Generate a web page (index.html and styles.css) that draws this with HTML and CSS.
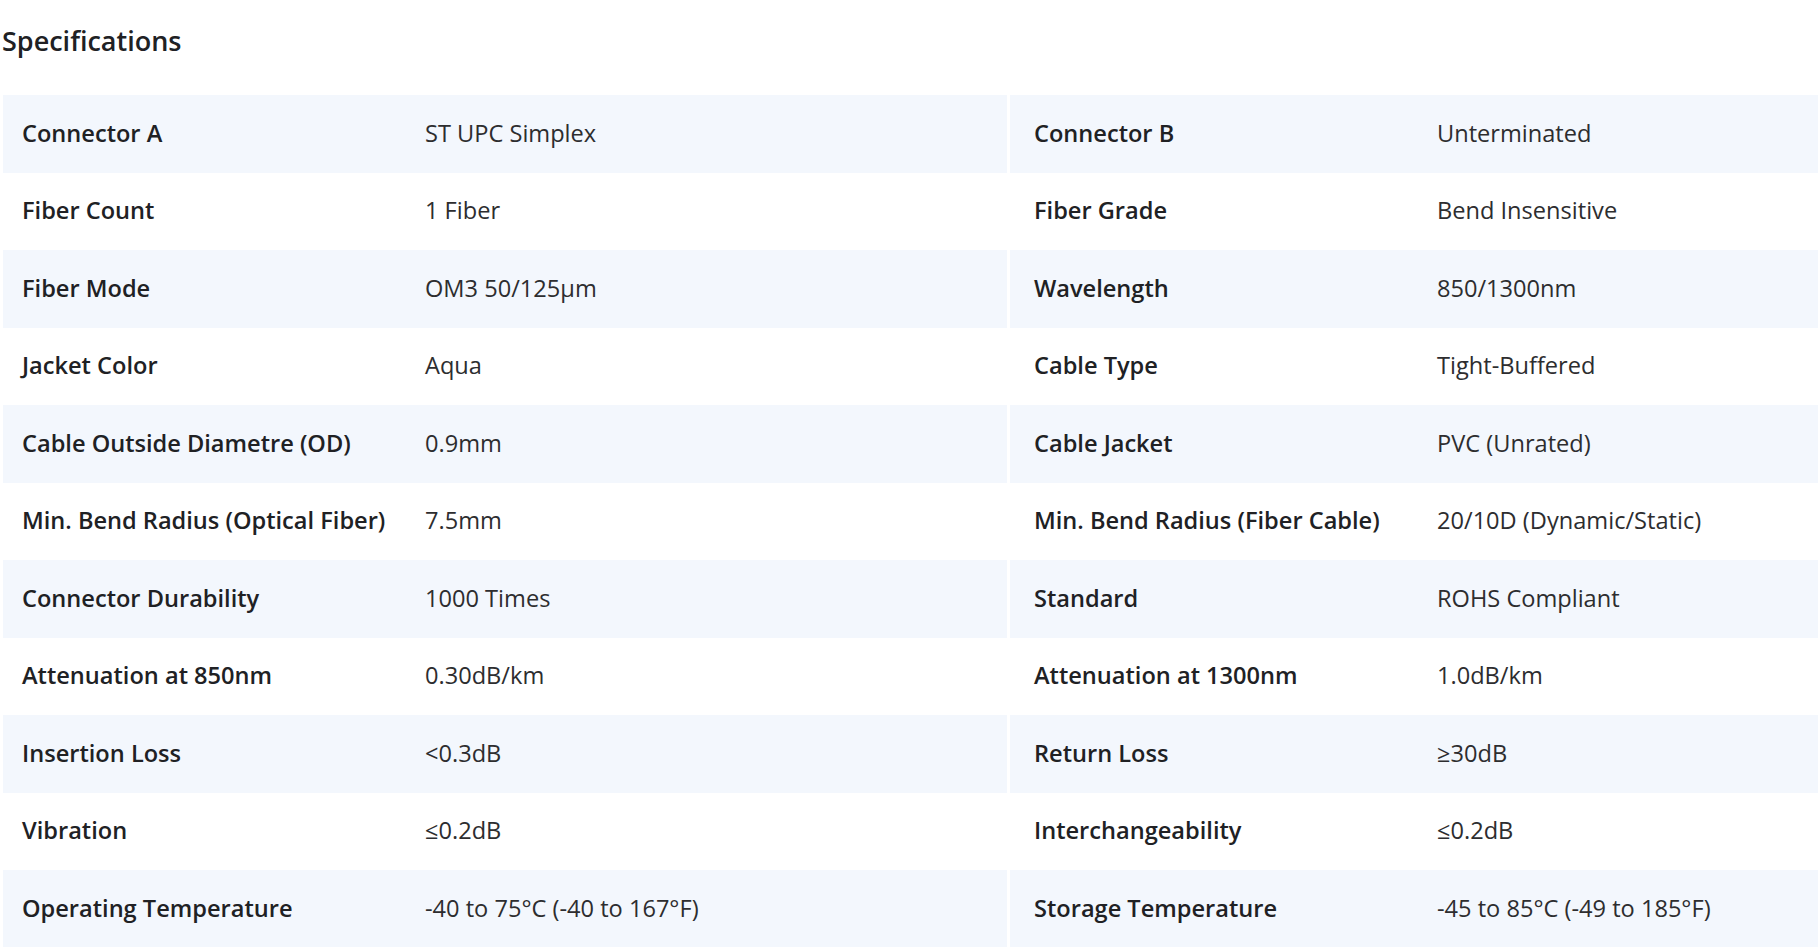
FILE: index.html
```html
<!DOCTYPE html>
<html lang="en">
<head>
<meta charset="utf-8">
<title>Specifications</title>
<link rel="stylesheet" href="styles.css">
</head>
<body>
<div class="page">
  <h2 class="title">Specifications</h2>
  <div class="spec-grid">
    <div class="spec-item left"><span class="label">Connector A</span><span class="value">ST UPC Simplex</span></div>
    <div class="spec-item right"><span class="label">Connector B</span><span class="value">Unterminated</span></div>
    <div class="spec-item left"><span class="label">Fiber Count</span><span class="value">1 Fiber</span></div>
    <div class="spec-item right"><span class="label">Fiber Grade</span><span class="value">Bend Insensitive</span></div>
    <div class="spec-item left"><span class="label">Fiber Mode</span><span class="value">OM3 50/125μm</span></div>
    <div class="spec-item right"><span class="label">Wavelength</span><span class="value">850/1300nm</span></div>
    <div class="spec-item left"><span class="label">Jacket Color</span><span class="value">Aqua</span></div>
    <div class="spec-item right"><span class="label">Cable Type</span><span class="value">Tight-Buffered</span></div>
    <div class="spec-item left"><span class="label">Cable Outside Diametre (OD)</span><span class="value">0.9mm</span></div>
    <div class="spec-item right"><span class="label">Cable Jacket</span><span class="value">PVC (Unrated)</span></div>
    <div class="spec-item left"><span class="label">Min. Bend Radius (Optical Fiber)</span><span class="value">7.5mm</span></div>
    <div class="spec-item right"><span class="label">Min. Bend Radius (Fiber Cable)</span><span class="value">20/10D (Dynamic/Static)</span></div>
    <div class="spec-item left"><span class="label">Connector Durability</span><span class="value">1000 Times</span></div>
    <div class="spec-item right"><span class="label">Standard</span><span class="value">ROHS Compliant</span></div>
    <div class="spec-item left"><span class="label">Attenuation at 850nm</span><span class="value">0.30dB/km</span></div>
    <div class="spec-item right"><span class="label">Attenuation at 1300nm</span><span class="value">1.0dB/km</span></div>
    <div class="spec-item left"><span class="label">Insertion Loss</span><span class="value">&lt;0.3dB</span></div>
    <div class="spec-item right"><span class="label">Return Loss</span><span class="value">≥30dB</span></div>
    <div class="spec-item left"><span class="label">Vibration</span><span class="value">≤0.2dB</span></div>
    <div class="spec-item right"><span class="label">Interchangeability</span><span class="value">≤0.2dB</span></div>
    <div class="spec-item left"><span class="label">Operating Temperature</span><span class="value">-40 to 75°C (-40 to 167°F)</span></div>
    <div class="spec-item right"><span class="label">Storage Temperature</span><span class="value">-45 to 85°C (-49 to 185°F)</span></div>
  </div>
</div>
</body>
</html>
```

FILE: styles.css
```css
html, body {
  margin: 0;
  padding: 0;
  background: #ffffff;
  overflow: hidden;
}

.page {
  width: 1818px;
  overflow: hidden;
  padding-left: 2px;
  box-sizing: border-box;
  font-family: "Open Sans", "Noto Sans", sans-serif;
  color: #202124;
}

.title {
  margin: 22px 0 36px 0;
  font-size: 27px;
  font-weight: 600;
  line-height: normal;
  color: #202124;
}

.spec-grid {
  margin-left: 1px;
  width: 2011px;
  display: grid;
  grid-template-columns: 1004px 1004px;
  grid-auto-rows: 77.5px;
  column-gap: 3px;
}

.spec-item {
  display: flex;
  align-items: center;
  padding-bottom: 2px;
  box-sizing: border-box;
  font-size: 23.6px;
}

.spec-item:nth-child(4n+1),
.spec-item:nth-child(4n+2) {
  background: #f3f7fd;
}

.spec-item.left {
  padding-left: 19px;
}

.spec-item.right {
  padding-left: 24px;
}

.label {
  width: 403px;
  flex: none;
  font-weight: 600;
  color: #202124;
}

.value {
  font-weight: 400;
  color: #2d2d2f;
}
```
